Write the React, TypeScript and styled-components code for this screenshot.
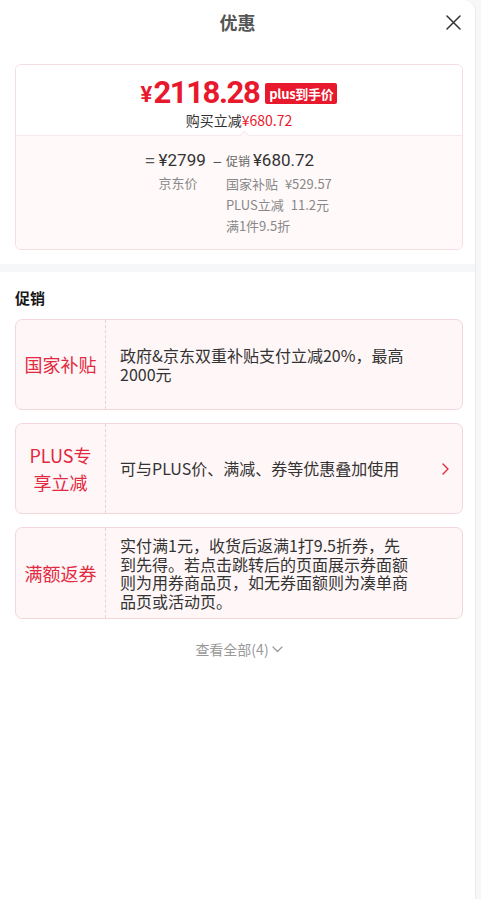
import React, { FC } from 'react';
import styled, { createGlobalStyle } from 'styled-components';

const RED = '#e8192c';
const LABEL_RED = '#e2293f';

const GlobalStyle = createGlobalStyle`
  html, body {
    margin: 0;
    padding: 0;
    background: #f7f7f7;
  }
  body {
    font-family: "Noto Sans CJK SC", "Noto Sans", sans-serif;
    color: #333;
  }
  * {
    box-sizing: border-box;
  }
`;

type Promo = {
  label: string;
  text: string;
  arrow?: boolean;
};

const PROMOS: Promo[] = [
  { label: '国家补贴', text: '政府&京东双重补贴支付立减20%，最高2000元' },
  { label: 'PLUS专享立减', text: '可与PLUS价、满减、券等优惠叠加使用', arrow: true },
  {
    label: '满额返券',
    text: '实付满1元，收货后返满1打9.5折券，先到先得。若点击跳转后的页面展示券面额则为用券商品页，如无券面额则为凑单商品页或活动页。',
  },
];

const DETAILS = [
  ['国家补贴', '¥529.57'],
  ['PLUS立减', '11.2元'],
  ['满1件9.5折', ''],
];

const App: FC = () => {
  return (
    <>
      <GlobalStyle />
      <Panel>
        <Header>
          <span />
          <Title>优惠</Title>
          <CloseButton aria-label="关闭">
            <svg width="15" height="15" viewBox="0 0 15 15" fill="none">
              <path d="M1 1L14 14M14 1L1 14" stroke="#333" strokeWidth="1.5" strokeLinecap="round" />
            </svg>
          </CloseButton>
        </Header>

        <Body>
          <PriceCard>
            <PriceTop>
              <PriceLine>
                <Yen>¥</Yen>
                <Amount>2118.28</Amount>
                <Badge>plus到手价</Badge>
              </PriceLine>
              <SubLine>
                购买立减<RedText>¥680.72</RedText>
              </SubLine>
            </PriceTop>
            <Breakdown>
              <Formula>
                <Operator>=</Operator>
                <Column>
                  <Figure>¥2799</Figure>
                  <Note>京东价</Note>
                </Column>
                <Operator>–</Operator>
                <Column>
                  <Figure>
                    <Tag>促销</Tag>¥680.72
                  </Figure>
                  {DETAILS.map(([name, value]) => (
                    <Note key={name}>
                      {name}
                      {value && <NoteValue>{value}</NoteValue>}
                    </Note>
                  ))}
                </Column>
              </Formula>
            </Breakdown>
          </PriceCard>
        </Body>

        <Band />

        <Body>
          <SectionTitle>促销</SectionTitle>
          <PromoList>
            {PROMOS.map(promo => (
              <PromoCard key={promo.label}>
                <PromoLabel>{promo.label}</PromoLabel>
                <PromoContent>
                  <PromoText>{promo.text}</PromoText>
                  <ArrowSlot>
                    {promo.arrow && (
                      <svg width="7" height="12" viewBox="0 0 7 12" fill="none">
                        <path d="M1 1L6 6L1 11" stroke={LABEL_RED} strokeWidth="1.4" strokeLinecap="round" strokeLinejoin="round" />
                      </svg>
                    )}
                  </ArrowSlot>
                </PromoContent>
              </PromoCard>
            ))}
          </PromoList>
          <ViewAll>
            查看全部(4)
            <svg width="11" height="7" viewBox="0 0 11 7" fill="none">
              <path d="M1 1L5.5 5.5L10 1" stroke="#999" strokeWidth="1.2" strokeLinecap="round" strokeLinejoin="round" />
            </svg>
          </ViewAll>
        </Body>
      </Panel>
    </>
  );
};

export default App;

const Panel = styled.div`
  width: 476px;
  min-height: 899px;
  background: #fff;
  border-right: 1px solid #ebebeb;
  border-top-right-radius: 12px;
`;

const Header = styled.div`
  display: grid;
  grid-template-columns: 1fr auto 1fr;
  align-items: center;
  height: 44px;
  padding: 0 14px 0 14px;
`;

const Title = styled.h1`
  margin: 0;
  font-size: 18px;
  font-weight: 700;
  color: #555;
  line-height: 44px;
`;

const CloseButton = styled.button`
  justify-self: end;
  display: flex;
  padding: 0;
  border: 0;
  background: none;
`;

const Body = styled.div`
  padding: 0 12px 0 15px;
`;

const PriceCard = styled.div`
  margin-top: 20px;
  border: 1px solid #f5dde0;
  border-radius: 6px;
  overflow: hidden;
`;

const PriceTop = styled.div`
  display: flex;
  flex-direction: column;
  align-items: center;
  padding: 12px 0 7px;
  background: #fff;
`;

const PriceLine = styled.div`
  display: flex;
  align-items: center;
  height: 32px;
  line-height: 32px;
  color: ${RED};
`;

const Yen = styled.span`
  font-family: Roboto, "Noto Sans CJK SC", sans-serif;
  font-size: 22px;
  font-weight: 700;
  margin-top: 4px;
  margin-right: 1px;
`;

const Amount = styled.span`
  font-family: Roboto, "Noto Sans CJK SC", sans-serif;
  font-size: 31px;
  font-weight: 700;
  letter-spacing: -1.4px;
`;

const Badge = styled.span`
  margin-left: 6px;
  padding: 0 4px;
  height: 21px;
  line-height: 21px;
  border-radius: 2px;
  background: ${RED};
  color: #fff;
  font-size: 13px;
  font-weight: 700;
  letter-spacing: -0.3px;
`;

const SubLine = styled.div`
  margin-top: 3px;
  font-size: 14px;
  line-height: 16px;
  color: #333;
`;

const RedText = styled.span`
  color: ${RED};
`;

const Breakdown = styled.div`
  position: relative;
  padding: 12px 0 13px;
  background: #fff9f9;
  border-top: 1px solid #f7eaec;

  &::before {
    content: '';
    position: absolute;
    top: -4px;
    left: 225px;
    width: 6px;
    height: 6px;
    background: #fff9f9;
    border-top: 1px solid #f7eaec;
    border-left: 1px solid #f7eaec;
    transform: rotate(45deg);
  }
`;

const Formula = styled.div`
  display: flex;
  justify-content: center;
  align-items: flex-start;
  padding-left: 6px;
`;

const Operator = styled.span`
  font-size: 17px;
  line-height: 24px;
  color: #555;
  padding: 0 4px 0 0;

  & + div {
    margin-right: 7px;
  }
`;

const Column = styled.div`
  display: flex;
  flex-direction: column;
  align-items: flex-start;
`;

const Figure = styled.div`
  display: flex;
  align-items: baseline;
  font-family: Roboto, "Noto Sans CJK SC", sans-serif;
  font-size: 17px;
  font-weight: 400;
  line-height: 24px;
  color: #333;
`;

const Tag = styled.span`
  font-family: "Noto Sans CJK SC", sans-serif;
  font-size: 12px;
  font-weight: 400;
  color: #666;
  margin-right: 3px;
`;

const Note = styled.div`
  font-size: 13px;
  line-height: 21px;
  color: #888;
`;

const NoteValue = styled.span`
  margin-left: 7px;
`;

const Band = styled.div`
  height: 8px;
  margin-top: 14px;
  background: #f6f7f9;
`;

const SectionTitle = styled.h2`
  margin: 15px 0 10px;
  font-size: 15px;
  font-weight: 700;
  line-height: 22px;
  color: #1a1a1a;
`;

const PromoList = styled.div`
  display: flex;
  flex-direction: column;
  gap: 13px;
`;

const PromoCard = styled.div`
  display: flex;
  min-height: 91px;
  background: #fff6f7;
  border: 1px solid #f4d7db;
  border-radius: 7px;
`;

const PromoLabel = styled.div`
  flex: 0 0 90px;
  display: flex;
  align-items: center;
  justify-content: center;
  padding: 0 8px;
  border-right: 1px dashed #ecd0d4;
  color: ${LABEL_RED};
  font-size: 18px;
  line-height: 27px;
  text-align: center;
`;

const PromoContent = styled.div`
  flex: 1;
  display: flex;
  align-items: center;
  padding: 8px 0 8px 14px;
`;

const PromoText = styled.div`
  flex: 1;
  font-size: 16px;
  line-height: 18.6px;
  color: #333;
`;

const ArrowSlot = styled.div`
  flex: 0 0 52px;
  display: flex;
  justify-content: flex-end;
  padding-right: 13px;
`;

const ViewAll = styled.div`
  display: flex;
  align-items: center;
  justify-content: center;
  gap: 3px;
  margin-top: 20px;
  font-size: 14px;
  line-height: 20px;
  color: #999;
`;
